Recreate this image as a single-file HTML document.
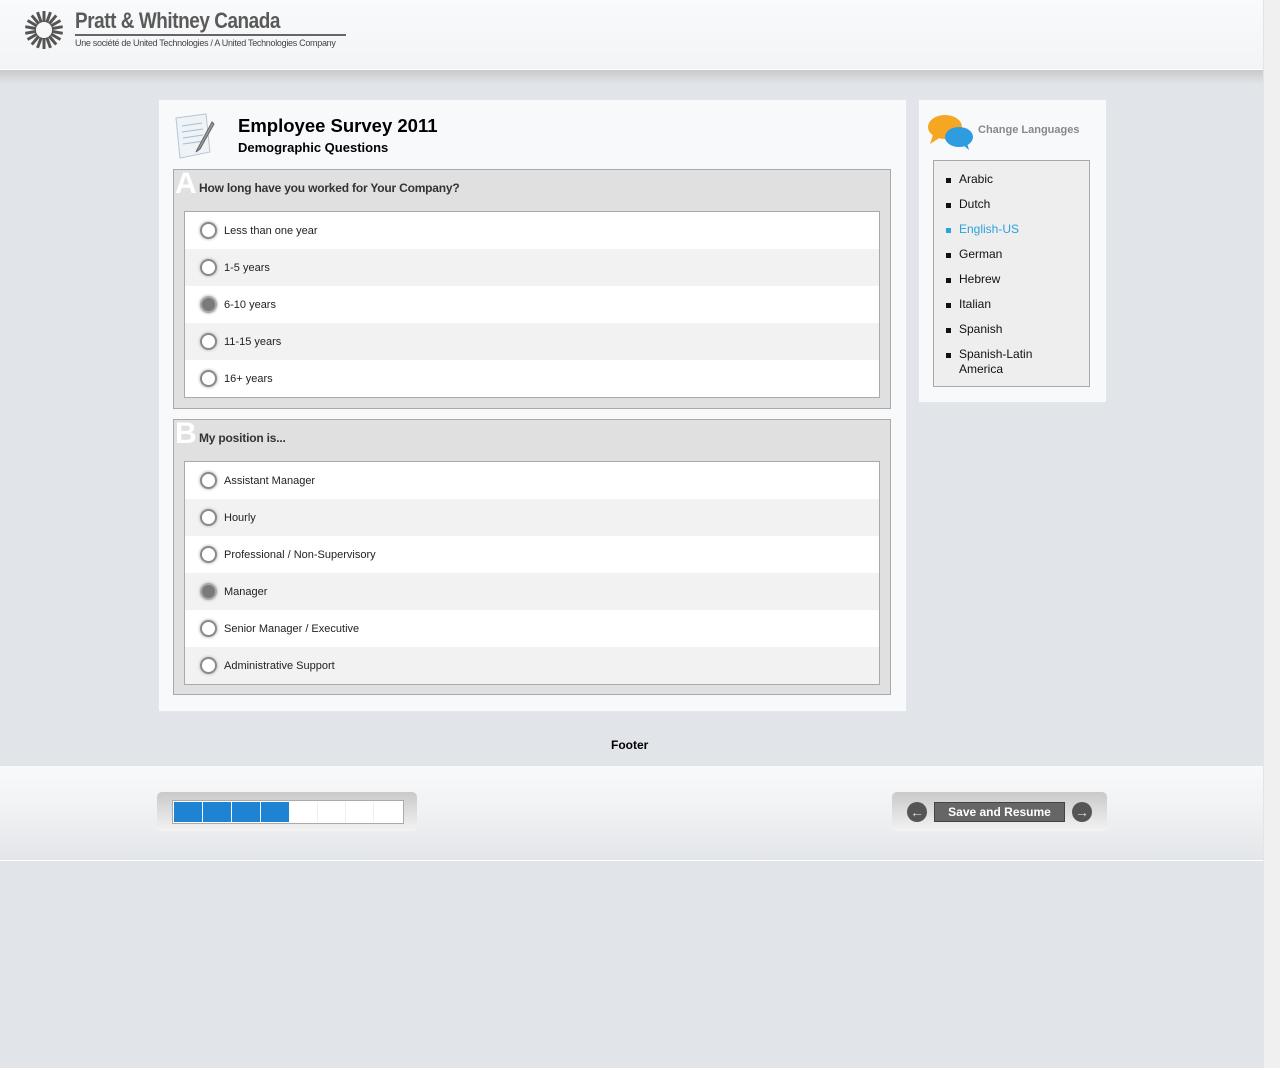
<!DOCTYPE html>
<html><head><meta charset="utf-8"><style>
*{margin:0;padding:0;box-sizing:border-box}
body{width:1280px;height:1068px;background:#e1e4e8;font-family:"Liberation Sans",sans-serif;position:relative;overflow:hidden}
.abs{position:absolute}
#hdr{left:0;top:0;width:1263px;height:70px;background:linear-gradient(#f9fafb,#f3f4f6);border-bottom:1px solid #fff}
#hsh{left:0;top:70px;width:1263px;height:14px;background:linear-gradient(#c8cacd,#e1e4e8)}
#sb{left:1263px;top:0;width:17px;height:1068px;background:#f0f0f0;border-left:1px solid #e4e4e4}
.panel{background:#f8f9fb;border:1px solid #e3e6ea}
.sec{background:#e0e0e0;border:1px solid #a9a9a9}
.inner{position:absolute;left:10px;background:#fff;border:1px solid #a9a9a9;width:696px}
.row{height:37px;position:relative;font-size:11px;color:#222}
.row:nth-child(even){background:#f2f2f2}
.row span{position:absolute;left:39px;top:13px}
.rad{position:absolute;left:15px;top:10px;width:17px;height:17px;border-radius:50%;background:#fff;border:2px solid #8a8a8a;box-shadow:0 0 2px 1px #ccc}
.rad.on{background:#7a7a7a;border-color:#aaa}
.q{position:absolute;left:25px;top:11px;font-size:12px;font-weight:bold;color:#333;letter-spacing:-.2px}
.let{position:absolute;left:1px;top:-3px;font-size:30px;font-weight:bold;color:#fff}
ul{list-style:none}
li{font-size:12px;color:#111;position:relative;padding-left:25px;padding-right:45px;margin-bottom:10px;line-height:15px}
li:before{content:"";position:absolute;left:12px;top:6px;width:5px;height:5px;background:#111}
li.c{color:#2aa3dd}li.c:before{background:#2aa3dd}
</style></head><body>
<div id="hdr" class="abs"></div><div id="hsh" class="abs"></div>
<svg class="abs" style="left:24px;top:10px" width="40" height="40" viewBox="-20 -20 40 40">
<g stroke="#555" stroke-width="3">
<line x1="0" y1="-8" x2="0" y2="-19" transform="rotate(0)"/><line x1="0" y1="-8" x2="0" y2="-19" transform="rotate(20)"/><line x1="0" y1="-8" x2="0" y2="-19" transform="rotate(40)"/><line x1="0" y1="-8" x2="0" y2="-19" transform="rotate(60)"/><line x1="0" y1="-8" x2="0" y2="-19" transform="rotate(80)"/><line x1="0" y1="-8" x2="0" y2="-19" transform="rotate(100)"/><line x1="0" y1="-8" x2="0" y2="-19" transform="rotate(120)"/><line x1="0" y1="-8" x2="0" y2="-19" transform="rotate(140)"/><line x1="0" y1="-8" x2="0" y2="-19" transform="rotate(160)"/><line x1="0" y1="-8" x2="0" y2="-19" transform="rotate(180)"/><line x1="0" y1="-8" x2="0" y2="-19" transform="rotate(200)"/><line x1="0" y1="-8" x2="0" y2="-19" transform="rotate(220)"/><line x1="0" y1="-8" x2="0" y2="-19" transform="rotate(240)"/><line x1="0" y1="-8" x2="0" y2="-19" transform="rotate(260)"/><line x1="0" y1="-8" x2="0" y2="-19" transform="rotate(280)"/><line x1="0" y1="-8" x2="0" y2="-19" transform="rotate(300)"/><line x1="0" y1="-8" x2="0" y2="-19" transform="rotate(320)"/><line x1="0" y1="-8" x2="0" y2="-19" transform="rotate(340)"/></g></svg>
<div class="abs" style="left:75px;top:8px;font-size:22px;font-weight:bold;color:#5a5a5a;letter-spacing:-.5px;transform:scaleX(.86);transform-origin:left">Pratt &amp; Whitney Canada</div>
<div class="abs" style="left:75px;top:34px;width:271px;height:2px;background:#666"></div>
<div class="abs" style="left:75px;top:38px;font-size:9px;color:#444;letter-spacing:-.3px;white-space:nowrap">Une société de United Technologies / A United Technologies Company</div>
<div id="sb" class="abs"></div>

<div class="abs panel" style="left:158px;top:99px;width:749px;height:613px"></div>
<svg class="abs" style="left:172px;top:112px" width="48" height="48"><path d="M4 6 L34 2 L38 40 L8 46 Z" fill="#eef3f8" stroke="#b8c6d4"/><g stroke="#a8bccc"><line x1="10" y1="14" x2="30" y2="11"/><line x1="10" y1="20" x2="31" y2="17"/><line x1="11" y1="26" x2="31" y2="23"/><line x1="11" y1="32" x2="32" y2="29"/></g><path d="M40 10 L26 36 L24 40 L28 37 L42 12 Z" fill="#999" stroke="#666"/></svg>
<div class="abs" style="left:238px;top:115px;font-size:18.5px;font-weight:bold;color:#000">Employee Survey 2011</div>
<div class="abs" style="left:238px;top:140px;font-size:13px;font-weight:bold;color:#000">Demographic Questions</div>

<div class="abs sec" style="left:173px;top:169px;width:718px;height:240px">
<div class="let">A</div><div class="q">How long have you worked for Your Company?</div>
<div class="inner" style="top:41px;height:187px">
<div class="row"><div class="rad"></div><span>Less than one year</span></div>
<div class="row"><div class="rad"></div><span>1-5 years</span></div>
<div class="row"><div class="rad on"></div><span>6-10 years</span></div>
<div class="row"><div class="rad"></div><span>11-15 years</span></div>
<div class="row"><div class="rad"></div><span>16+ years</span></div>
</div></div>

<div class="abs sec" style="left:173px;top:419px;width:718px;height:276px">
<div class="let">B</div><div class="q">My position is...</div>
<div class="inner" style="top:41px;height:224px">
<div class="row"><div class="rad"></div><span>Assistant Manager</span></div>
<div class="row"><div class="rad"></div><span>Hourly</span></div>
<div class="row"><div class="rad"></div><span>Professional / Non-Supervisory</span></div>
<div class="row"><div class="rad on"></div><span>Manager</span></div>
<div class="row"><div class="rad"></div><span>Senior Manager / Executive</span></div>
<div class="row"><div class="rad"></div><span>Administrative Support</span></div>
</div></div>

<div class="abs panel" style="left:918px;top:99px;width:189px;height:304px"></div>
<svg class="abs" style="left:927px;top:113px" width="48" height="38"><ellipse cx="18" cy="14" rx="17" ry="12" fill="#f5a623"/><path d="M6 22 L3 31 L14 24Z" fill="#f5a623"/><ellipse cx="32" cy="24" rx="14" ry="10" fill="#2d9de0"/><path d="M36 32 L42 37 L40 30Z" fill="#2d9de0"/></svg>
<div class="abs" style="left:978px;top:124px;font-size:11px;font-weight:bold;color:#888">Change Languages</div>
<div class="abs" style="left:933px;top:160px;width:157px;height:227px;background:#eee;border:1px solid #a9a9a9;padding-top:11px">
<ul><li>Arabic</li><li>Dutch</li><li class="c">English-US</li><li>German</li><li>Hebrew</li><li>Italian</li><li>Spanish</li><li>Spanish-Latin America</li></ul></div>

<div class="abs" style="left:611px;top:738px;font-size:12px;font-weight:bold;color:#000">Footer</div>
<div class="abs" style="left:0;top:766px;width:1263px;height:95px;background:linear-gradient(#f8f9fb,#f2f3f5 40%,#e3e6e9);border-bottom:1px solid #fff"></div>
<div class="abs" style="left:157px;top:792px;width:260px;height:39px;border-radius:5px;background:linear-gradient(#c9c9c9,#f3f3f3)"></div>
<div class="abs" style="left:172px;top:800px;width:232px;height:24px;border:1px solid #aaa;background:#fff;display:flex;padding:1px">
<div style="width:28px;background:#1e83d2;margin-right:1px"></div><div style="width:28px;background:#1e83d2;margin-right:1px"></div><div style="width:28px;background:#1e83d2;margin-right:1px"></div><div style="width:28px;background:#1e83d2;margin-right:1px"></div><div style="width:28px;border-right:1px solid #eee"></div><div style="width:28px;border-right:1px solid #eee"></div><div style="width:28px;border-right:1px solid #eee"></div></div>
<div class="abs" style="left:892px;top:792px;width:215px;height:39px;border-radius:5px;background:linear-gradient(#c9c9c9,#f3f3f3)"></div>
<div class="abs" style="left:907px;top:802px;width:20px;height:20px;border-radius:50%;background:#555;color:#ddd;font-size:14px;font-weight:bold;text-align:center;line-height:20px">←</div>
<div class="abs" style="left:934px;top:802px;height:20px;background:#666;border:1px solid #444;color:#fff;font-size:12px;font-weight:bold;text-align:center;line-height:18px;width:131px">Save and Resume</div>
<div class="abs" style="left:1072px;top:802px;width:20px;height:20px;border-radius:50%;background:#555;color:#ddd;font-size:14px;font-weight:bold;text-align:center;line-height:20px">→</div>
</body></html>
